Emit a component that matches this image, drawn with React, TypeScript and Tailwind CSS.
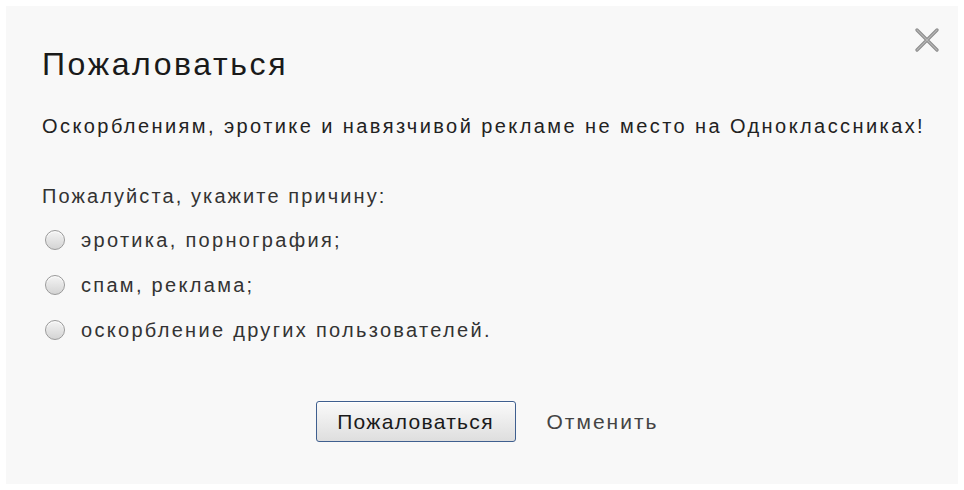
import React from 'react';

const reasons = ['эротика, порнография;', 'спам, реклама;', 'оскорбление других пользователей.'];

export default function App() {
    return (
        <div className="w-[964px] h-[490px] bg-white p-[6px] font-['Liberation_Sans',Arial,sans-serif] text-[#222]">
            <div className="relative w-full h-full bg-[#f8f8f8] px-[36px] pt-[38px]">
                <button className="absolute right-[17px] top-[20px] w-[28px] h-[28px] flex items-center justify-center">
                    <svg width="24" height="24" viewBox="0 0 24 24">
                        <path d="M2 2 L22 22 M22 2 L2 22" stroke="#8a8a8a" strokeWidth="3.2" strokeLinecap="round" />
                        <path d="M2 2 L22 22 M22 2 L2 22" stroke="#b5b5b5" strokeWidth="1.2" strokeLinecap="round" />
                    </svg>
                </button>
                <h1 className="text-[32px] leading-[40px] tracking-[2.6px] text-[#1a1a1a]">Пожаловаться</h1>
                <p className="mt-[28px] whitespace-nowrap text-[20px] leading-[28px] tracking-[2.42px]">
                    Оскорблениям, эротике и навязчивой рекламе не место на Одноклассниках!
                </p>
                <p className="mt-[42px] text-[20px] leading-[28px] tracking-[2.1px] text-[#333]">Пожалуйста, укажите причину:</p>
                <div className="mt-[16px] flex flex-col gap-[17px]">
                    {reasons.map((r) => (
                        <label key={r} className="flex items-center gap-[16px] text-[20px] leading-[28px] tracking-[2.3px] text-[#333]">
                            <span className="ml-[3px] w-[20px] h-[20px] rounded-full border border-[#9a9a9a] bg-gradient-to-b from-[#f4f4f4] to-[#d4d4d4] shadow-[inset_0_1px_1px_rgba(255,255,255,0.9)]" />
                            {r}
                        </label>
                    ))}
                </div>
                <div className="mt-[57px] pl-[10px] flex items-center justify-center gap-[31px]">
                    <button className="w-[200px] h-[41px] rounded-[3px] border border-[#3f5f8f] bg-gradient-to-b from-[#fafafa] to-[#dedede] text-[21px] tracking-[1.3px] text-[#1a1a1a] shadow-[inset_0_1px_0_#fff]">
                        Пожаловаться
                    </button>
                    <button className="text-[21px] tracking-[2px] text-[#444]">Отменить</button>
                </div>
            </div>
        </div>
    );
}
